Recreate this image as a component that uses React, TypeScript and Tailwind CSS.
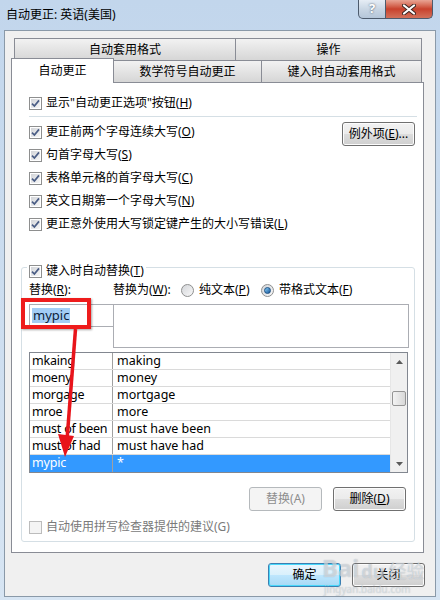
import React from 'react'

const font = "font-['Noto_Sans','Noto_Sans_CJK_SC',sans-serif]"

function Check({ checked = true, disabled = false }: { checked?: boolean; disabled?: boolean }) {
    return (
        <span
            className={
                disabled
                    ? 'w-[13px] h-[13px] border border-[#bcbcbc] bg-[#f4f4f4] shrink-0'
                    : 'w-[13px] h-[13px] border border-[#8e8f8f] bg-white p-[1px] shrink-0 flex'
            }
        >
            {!disabled && (
                <span className="flex-1 bg-gradient-to-br from-[#d2d4d8] to-[#f7f7f7] flex items-center justify-center">
                    {checked && (
                        <svg width="9" height="9" viewBox="0 0 9 9">
                            <path d="M1 4.6 L3.4 7 L8 1.4" stroke="#4a5d85" strokeWidth="1.7" fill="none" />
                        </svg>
                    )}
                </span>
            )}
        </span>
    )
}

function Radio({ on = false }: { on?: boolean }) {
    return (
        <span className="w-[13px] h-[13px] rounded-full border border-[#8e8f8f] bg-gradient-to-br from-[#d4d6da] to-[#f8f8f8] flex items-center justify-center shrink-0">
            {on && <span className="w-[7px] h-[7px] rounded-full bg-gradient-to-br from-[#8ad0f8] to-[#14579a] border border-[#1b4f82]"></span>}
        </span>
    )
}

function Btn({ children, disabled = false, focused = false, className = '' }: { children: React.ReactNode; disabled?: boolean; focused?: boolean; className?: string }) {
    const look = disabled
        ? 'border-[#b5b9bc] bg-[#f4f4f4] text-[#8d8d8d]'
        : focused
            ? 'border-[#3c7fb1] bg-[linear-gradient(#eaf6fd_0%,#d9f0fc_50%,#bee6fd_51%,#a7d9f5_100%)] shadow-[inset_0_0_0_1px_#48d8fb] text-black'
            : 'border-[#707070] bg-[linear-gradient(#f2f2f2_0%,#ebebeb_50%,#dddddd_51%,#cfcfcf_100%)] shadow-[inset_0_0_0_1px_#fcfcfc] text-black'
    return (
        <div className={`w-[73px] h-[24px] border rounded-[3px] flex items-center justify-center text-[12px] ${look} ${className}`}>
            {children}
        </div>
    )
}

function Row({ children, disabled = false, checked = true }: { children: React.ReactNode; disabled?: boolean; checked?: boolean }) {
    return (
        <div className="h-[16px] flex items-center gap-[4px]">
            <Check disabled={disabled} checked={checked} />
            <span className={disabled ? 'text-[12px] text-[#7a7a7a] leading-none' : 'text-[12px] text-black leading-none'}>{children}</span>
        </div>
    )
}

const entries = [
    ['mkaing', 'making'],
    ['moeny', 'money'],
    ['morgage', 'mortgage'],
    ['mroe', 'more'],
    ['must of been', 'must have been'],
    ['must of had', 'must have had'],
    ['mypic', '*'],
]

export default function App() {
    return (
        <div className={`w-[440px] h-[600px] relative overflow-hidden bg-gradient-to-b from-[#c2d6ec] to-[#d7e5f3] ${font}`}>
            {/* title bar */}
            <div className="h-[30px] flex items-start">
                <span className="ml-[6px] mt-[6px] text-[12px] text-black">自动更正: 英语(美国)</span>
                <div className="ml-auto mr-[7px] flex">
                    <div className="w-[28px] h-[19px] border border-t-0 border-[#4d5b6d] rounded-bl-[5px] bg-gradient-to-b from-[#e6edf5] via-[#c9d6e4] to-[#b5c6d9] flex items-center justify-center text-[13px] font-bold text-white [text-shadow:0_0_2px_#3a4656]">?</div>
                    <div className="w-[47px] h-[19px] border border-t-0 border-l-0 border-[#4d5b6d] rounded-br-[5px] bg-gradient-to-b from-[#e8a494] via-[#c8412c] to-[#d2705a] flex items-center justify-center">
                        <svg width="14" height="11" viewBox="0 0 14 11">
                            <path d="M2 1.5 L12 9.5 M12 1.5 L2 9.5" stroke="#3a2420" strokeWidth="4" strokeLinecap="round" />
                            <path d="M2 1.5 L12 9.5 M12 1.5 L2 9.5" stroke="#ffffff" strokeWidth="2.2" strokeLinecap="round" />
                        </svg>
                    </div>
                </div>
            </div>

            {/* client area */}
            <div className="mx-[4px] h-[567px] border border-[#8a99a8] bg-[#f0f0f0] flex flex-col">
                {/* back tab row */}
                <div className="mt-[7px] ml-[9px] flex h-[22px]">
                    <div className="w-[222px] border border-b-0 border-[#898c95] bg-gradient-to-b from-[#f2f2f2] to-[#d6d6d6] flex items-center justify-center text-[12px]">自动套用格式</div>
                    <div className="w-[186px] border border-b-0 border-l-0 border-[#898c95] bg-gradient-to-b from-[#f2f2f2] to-[#d6d6d6] flex items-center justify-center text-[12px]">操作</div>
                </div>
                {/* front tab row */}
                <div className="ml-[6px] flex items-end h-[22px] relative z-10">
                    <div className="w-[103px] h-[25px] -mb-[1px] border border-b-0 border-[#898c95] bg-white flex items-center justify-center text-[12px]">自动更正</div>
                    <div className="w-[148px] h-[22px] border border-b-0 border-l-0 border-[#898c95] bg-gradient-to-b from-[#f2f2f2] to-[#d6d6d6] flex items-center justify-center text-[12px]">数学符号自动更正</div>
                    <div className="w-[160px] h-[22px] border border-b-0 border-l-0 border-[#898c95] bg-gradient-to-b from-[#f2f2f2] to-[#d6d6d6] flex items-center justify-center text-[12px]">键入时自动套用格式</div>
                </div>

                {/* tab panel */}
                <div className="ml-[6px] w-[413px] h-[471px] border border-[#898c95] bg-white flex flex-col pl-[17px]">
                    <div className="mt-[12px]">
                        <Row>显示"自动更正选项"按钮(<u>H</u>)</Row>
                    </div>
                    <div className="mt-[5px] w-[388px] h-[1px] bg-[#d5dfe5]"></div>

                    <div className="flex mt-[7px]">
                        <div className="flex flex-col gap-[7px]">
                            <Row>更正前两个字母连续大写(<u>O</u>)</Row>
                            <Row>句首字母大写(<u>S</u>)</Row>
                            <Row>表格单元格的首字母大写(<u>C</u>)</Row>
                            <Row>英文日期第一个字母大写(<u>N</u>)</Row>
                            <Row>更正意外使用大写锁定键产生的大小写错误(<u>L</u>)</Row>
                        </div>
                        <Btn className="ml-auto mr-[8px] -mt-[2px]">例外项(<u>E</u>)...</Btn>
                    </div>

                    {/* group box */}
                    <div className="mt-[35px] -ml-[8px] w-[394px] h-[275px] border border-[#d5dfe5] rounded-[3px] flex flex-col pl-[7px]">
                        <div className="-mt-[5px] -ml-[2px] px-[2px] bg-white self-start">
                            <Row>键入时自动替换(<u>T</u>)</Row>
                        </div>
                        <div className="mt-[3px] h-[16px] flex items-center text-[12px] leading-none">
                            <span className="w-[84px]">替换(<u>R</u>):</span>
                            <span className="w-[68px]">替换为(<u>W</u>):</span>
                            <Radio />
                            <span className="ml-[5px] w-[62px]">纯文本(<u>P</u>)</span>
                            <Radio on />
                            <span className="ml-[5px]">带格式文本(<u>F</u>)</span>
                        </div>
                        <div className="mt-[6px] flex items-start">
                            <div className="w-[84px] h-[23px] border border-r-0 border-[#abadb3] bg-white flex items-center pl-[2px]">
                                <span className="bg-[#a3cdf5] text-[#0d1d3a] text-[13px] leading-[15px] px-[1px]">mypic</span>
                            </div>
                            <div className="w-[296px] h-[44px] border border-[#abadb3] bg-white"></div>
                        </div>
                        <div className="mt-[4px] w-[379px] h-[121px] border border-[#828790] bg-white flex">
                            <div className="flex-1 flex flex-col">
                                {entries.map(([a, b], i) => {
                                    const sel = i === entries.length - 1
                                    return (
                                        <div key={a} className={sel ? 'h-[17px] flex bg-[#3399ff] text-white text-[12.5px] leading-none' : 'h-[17px] flex border-b border-[#dadada] text-black text-[12.5px] leading-none'}>
                                            <span className="w-[83px] border-r border-[#a0a0a0] pl-[2px] flex items-center whitespace-nowrap overflow-hidden tracking-[-0.2px]">{a}</span>
                                            <span className="flex-1 pl-[4px] flex items-center">{b}</span>
                                        </div>
                                    )
                                })}
                            </div>
                            <div className="w-[17px] bg-[#f0f0f0] flex flex-col items-center border-l border-[#e6e6e6]">
                                <div className="h-[17px] flex items-center justify-center">
                                    <svg width="7" height="4" viewBox="0 0 7 4"><path d="M0 4 L3.5 0 L7 4 Z" fill="#5a5a5a" /></svg>
                                </div>
                                <div className="mt-[21px] w-[14px] h-[15px] rounded-[2px] border border-[#959595] bg-gradient-to-r from-[#f3f3f3] to-[#d8d8d8]"></div>
                                <div className="mt-auto h-[17px] flex items-center justify-center">
                                    <svg width="7" height="4" viewBox="0 0 7 4"><path d="M0 0 L3.5 4 L7 0 Z" fill="#5a5a5a" /></svg>
                                </div>
                            </div>
                        </div>
                        <div className="mt-[14px] flex justify-end gap-[11px] mr-[8px]">
                            <Btn disabled>替换(A)</Btn>
                            <Btn>删除(<u>D</u>)</Btn>
                        </div>
                        <div className="mt-[8px]">
                            <Row disabled checked={false}>自动使用拼写检查器提供的建议(G)</Row>
                        </div>
                    </div>
                </div>

                <div className="mt-[10px] flex justify-end gap-[11px] mr-[10px]">
                    <Btn focused>确定</Btn>
                    <Btn>关闭</Btn>
                </div>
            </div>

            {/* annotation: red box and arrow */}
            <div className="absolute left-[21px] top-[298px] w-[70px] h-[31px] border-[4px] border-[#ee1c1c] shadow-[1px_1px_2px_rgba(0,0,0,0.35)]"></div>
            <svg className="absolute left-0 top-0" width="440" height="600" viewBox="0 0 440 600">
                <path d="M75.5 329 L67 440" stroke="#e8141b" strokeWidth="3.5" />
                <path d="M58 434 L65 457 L74 436 Z" fill="#e8141b" />
            </svg>

            {/* watermark */}
            <div className="absolute left-[322px] top-[556px] flex items-end gap-[2px] leading-none text-white/45 [text-shadow:0_0_1px_rgba(120,135,150,0.6)] pointer-events-none">
                <span className="text-[24px] font-bold">Bai</span>
                <span className="text-[18px] font-bold">du</span>
                <span className="text-[18px] ml-[2px]">经验</span>
            </div>
            <div className="absolute left-[324px] top-[584px] text-[10px] leading-none text-white/45 [text-shadow:0_0_1px_rgba(120,135,150,0.6)] pointer-events-none">jingyan.baidu.com</div>
        </div>
    )
}
